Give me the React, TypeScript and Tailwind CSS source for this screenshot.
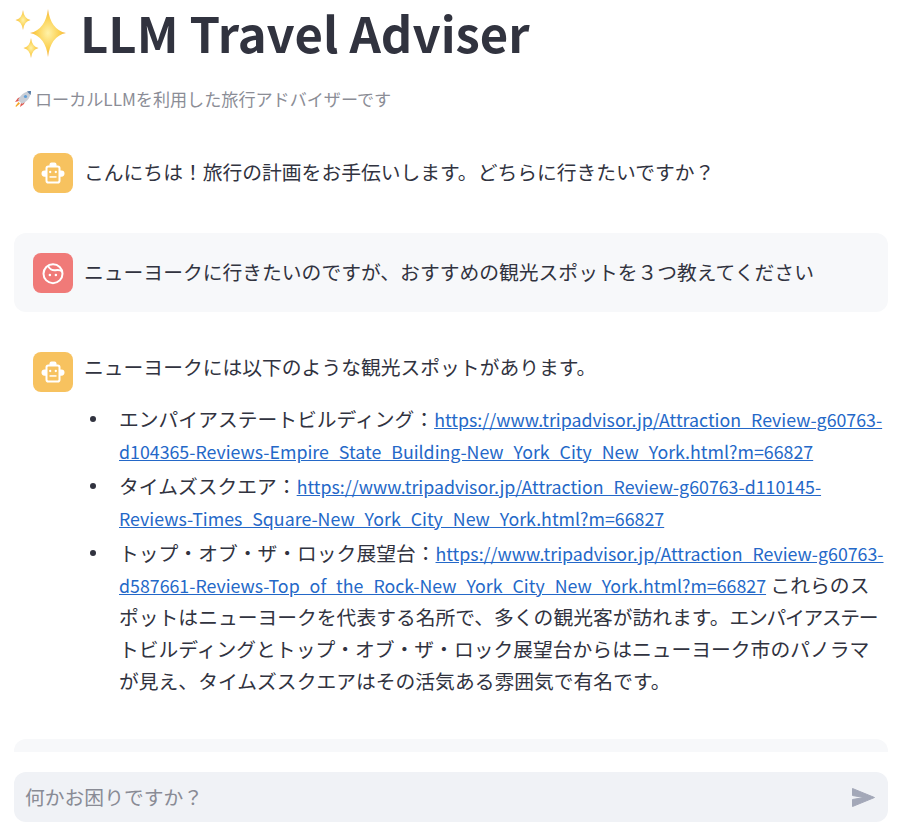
import React from "react";

const font = { fontFamily: '"Noto Sans CJK JP", "Noto Sans", sans-serif' };

function Sparkles() {
  const star = (cx: number, cy: number, rx: number, ry: number, key: string) => {
    const kx = rx * 0.14;
    const ky = ry * 0.14;
    return (
      <path
        key={key}
        d={`M${cx} ${cy - ry} Q${cx + kx} ${cy - ky} ${cx + rx} ${cy} Q${cx + kx} ${cy + ky} ${cx} ${cy + ry} Q${cx - kx} ${cy + ky} ${cx - rx} ${cy} Q${cx - kx} ${cy - ky} ${cx} ${cy - ry}Z`}
        fill="url(#spark)"
      />
    );
  };
  return (
    <svg width="52" height="50" viewBox="0 0 52 50" className="shrink-0">
      <defs>
        <radialGradient id="spark" cx="50%" cy="50%" r="55%">
          <stop offset="0%" stopColor="#fff2a8" />
          <stop offset="60%" stopColor="#fbcf4e" />
          <stop offset="100%" stopColor="#f2a53a" />
        </radialGradient>
      </defs>
      {star(33, 24, 18, 24, "a")}
      {star(8, 11, 7.500, 10, "b")}
      {star(16, 39, 7.500, 10, "c")}
    </svg>
  );
}

function Rocket() {
  return (
    <svg width="18" height="18" viewBox="0 0 18 18" className="shrink-0">
      <path d="M5 11 L1 12 L4 8 L7 7Z" fill="#e2574c" />
      <path d="M7 13 L6 17 L10 14 L11 11Z" fill="#e2574c" />
      <path d="M4 10 C7 4 11 1.500 17 1 C16.500 7 14 11 8 14Z" fill="#c9ced6" />
      <path d="M13 1.400 C14.800 1 16 1 17 1 C17 2 16.900 3.400 16.600 5Z" fill="#5b7fa8" />
      <circle cx="11.500" cy="6.500" r="1.600" fill="#5f9fd8" />
      <path d="M4.500 12 L6 13.500 L2 17 L1.500 16Z" fill="#f6a623" />
    </svg>
  );
}

function BotAvatar() {
  return (
    <div className="w-10 h-10 rounded-lg bg-[#f7c25f] flex items-center justify-center shrink-0">
      <svg width="24" height="24" viewBox="0 0 24 24">
        <path d="M8.500 5.500 V3.500 a2 2 0 0 1 2-2 h3 a2 2 0 0 1 2 2 V5.500Z" fill="#ffffff" />
        <rect x="5.500" y="5.500" width="13" height="16" rx="1.800" fill="none" stroke="#ffffff" strokeWidth="2" />
        <path d="M5 9.500 H3.500 a3 3 0 0 0-3 3 a3.200 3.200 0 0 0 3 3.200 H5Z" fill="#ffffff" />
        <path d="M19 9.500 h1.500 a3 3 0 0 1 3 3 a3.200 3.200 0 0 1-3 3.200 H19Z" fill="#ffffff" />
        <circle cx="9.200" cy="11" r="1.150" fill="#ffffff" />
        <circle cx="14.800" cy="11" r="1.150" fill="#ffffff" />
        <rect x="8.500" y="15.200" width="7" height="1.500" fill="#ffffff" />
      </svg>
    </div>
  );
}

function UserAvatar() {
  return (
    <div className="w-10 h-10 rounded-lg bg-[#f07a78] flex items-center justify-center shrink-0">
      <svg width="24" height="24" viewBox="0 0 24 24" fill="none" stroke="#ffffff" strokeWidth="2">
        <circle cx="12" cy="12.700" r="9.500" />
        <path d="M7 4.500 C8.200 8 11.500 9.600 14.500 9.200 C17 8.900 19.500 9 21.300 10.500" />
        <circle cx="8.900" cy="14" r="1.250" fill="#ffffff" stroke="none" />
        <circle cx="14.900" cy="14" r="1.250" fill="#ffffff" stroke="none" />
      </svg>
    </div>
  );
}

function Link({ children }: { children: React.ReactNode }) {
  return (
    <a href="#" className="text-[17.8px] text-[#2468c8] underline">
      {children}
    </a>
  );
}

function Item({ children }: { children: React.ReactNode }) {
  return (
    <li className="flex">
      <span className="w-[35px] shrink-0 pt-[13px] pl-[6px]">
        <span className="block w-[6px] h-[6px] rounded-full bg-[#31333f]"></span>
      </span>
      <div className="min-w-0 flex-1">{children}</div>
    </li>
  );
}

export default function App() {
  return (
    <div className="w-[900px] h-[830px] overflow-hidden bg-white flex flex-col text-[#31333f]" style={font}>
      <div className="h-[752px] overflow-hidden pl-[14px] pr-[12px]">
        <div className="flex items-center h-[60px] pt-[8px] pl-[1px]">
          <Sparkles />
          <h1 className="ml-[13px] text-[49px] font-bold leading-[60px] -mt-[4px] whitespace-nowrap">LLM Travel Adviser</h1>
        </div>
        <div className="flex items-center h-[32px] mt-[23px] text-[17.1px] text-[#8b8d96] leading-[32px]">
          <Rocket />
          <span className="ml-[3px]">ローカルLLMを利用した旅行アドバイザーです</span>
        </div>
        <div className="mt-[18px] flex flex-col gap-5">
          <div className="flex gap-[11px] rounded-xl pl-[19px] pr-[3px] py-5 h-[80px]">
            <BotAvatar />
            <p className="text-[19.8px] leading-[38px]">こんにちは！旅行の計画をお手伝いします。どちらに行きたいですか？</p>
          </div>
          <div className="flex gap-[11px] rounded-xl pl-[19px] pr-[3px] py-5 h-[79px] bg-[#f7f8fa]">
            <UserAvatar />
            <p className="text-[19.8px] leading-[38px]">ニューヨークに行きたいのですが、おすすめの観光スポットを３つ教えてください</p>
          </div>
          <div className="flex gap-[11px] rounded-xl pl-[19px] pr-[3px] pt-5 pb-[22px]">
            <BotAvatar />
            <div className="text-[19.8px] leading-[32px] min-w-0 flex-1">
              <p className="leading-[30px]">ニューヨークには以下のような観光スポットがあります。</p>
              <ul className="mt-[21px] flex flex-col gap-[3px]">
                <Item>
                  エンパイアステートビルディング：<Link>https://www.tripadvisor.jp/Attraction_Review-g60763-<br />d104365-Reviews-Empire_State_Building-New_York_City_New_York.html?m=66827</Link>
                </Item>
                <Item>
                  タイムズスクエア：<Link>https://www.tripadvisor.jp/Attraction_Review-g60763-d110145-<br />Reviews-Times_Square-New_York_City_New_York.html?m=66827</Link>
                </Item>
                <Item>
                  トップ・オブ・ザ・ロック展望台：<Link>https://www.tripadvisor.jp/Attraction_Review-g60763-<br />d587661-Reviews-Top_of_the_Rock-New_York_City_New_York.html?m=66827</Link>{" "}
                  これらのス<br />ポットはニューヨークを代表する名所で、多くの観光客が訪れます。<span className="tracking-[-1.3px]">エンパイアステー</span><br />トビルディングとトップ・オブ・ザ・ロック展望台からはニューヨーク市のパノラマ<br />が見え、タイムズスクエアはその活気ある雰囲気で有名です。
                </Item>
              </ul>
            </div>
          </div>
          <div className="h-[60px] rounded-xl bg-[#f7f8fa]"></div>
        </div>
      </div>
      <div className="pl-[14px] pr-[12px] pt-5">
        <div className="h-[50px] rounded-xl bg-[#f0f2f6] flex items-center justify-between pl-[11px] pr-[13px]">
          <span className="text-[19.8px] text-[#898b95]">何かお困りですか？</span>
          <svg width="23" height="19" viewBox="0 0 23 19" fill="#a3a8b8">
            <path d="M0.500 0.500 L22.500 9.500 L0.500 18.500 V11.500 L12 9.500 L0.500 7.500 Z" stroke="#a3a8b8" strokeWidth="1" strokeLinejoin="round" />
          </svg>
        </div>
      </div>
    </div>
  );
}
